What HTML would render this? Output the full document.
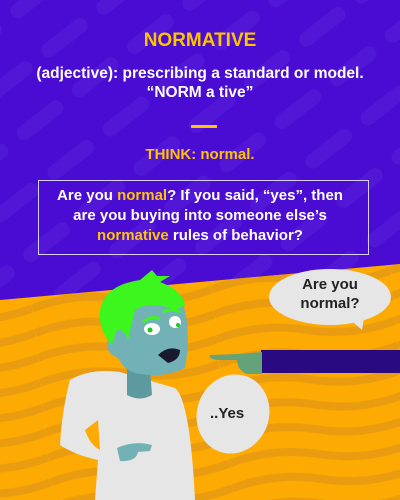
<!DOCTYPE html>
<html><head><meta charset="utf-8"><style>
html,body{margin:0;padding:0}
body{width:400px;height:500px;overflow:hidden;position:relative;background:#4a0cd2;font-family:"Liberation Sans",sans-serif}
svg{position:absolute;left:0;top:0}
.t{position:absolute;left:0;width:400px;text-align:center;color:#fff;font-weight:bold;white-space:nowrap}
.y{color:#ffc400}
</style></head><body>
<svg width="400" height="500" viewBox="0 0 400 500">
<defs>
<pattern id="p" width="70" height="50" patternUnits="userSpaceOnUse" patternTransform="rotate(-38)">
<rect x="0" y="12" width="55" height="15" rx="7.5" fill="#5116d6"/>
</pattern>
<pattern id="w" width="180" height="25" patternUnits="userSpaceOnUse" patternTransform="rotate(-6)">
<path d="M0 10 Q45 -2 90 10 T180 10" stroke="#e99c10" stroke-width="8" fill="none"/>
</pattern>
</defs>
<rect width="400" height="300" fill="url(#p)"/>
<polygon points="0,300 400,264 400,500 0,500" fill="#fdaa03"/>
<polygon points="0,300 400,264 400,500 0,500" fill="url(#w)"/>
<!-- body -->
<path d="M70 380 Q90 368 120 372 L175 388 Q190 400 195 500 L95 500 L98 460 Q75 455 60 445 Q62 410 70 380Z" fill="#e6e6e6"/>
<path d="M85 430 Q90 445 100 450 L98 420Z" fill="#fdaa03"/>
<path d="M117 448 Q135 440 152 445 L150 451 L138 452 Q136 462 120 461Z" fill="#72b2b6"/>
<!-- neck -->
<path d="M127 368 L150 368 L152 395 Q140 402 127 395Z" fill="#5c9a9f"/>
<!-- head -->
<path d="M110 300 Q150 285 182 300 Q192 330 185 368 Q165 378 140 374 Q125 372 118 358 Q104 352 108 340 Q110 330 115 330 Z" fill="#72b2b6"/>
<!-- hair -->
<path d="M100 310 Q105 285 140 280 L152 270 L157 276 L170 276 L160 282 Q182 290 185 305 L175 310 Q150 300 135 310 L128 340 Q120 322 115 335 L112 345 Q98 330 100 310Z" fill="#3cf61e"/>
<!-- eyes -->
<ellipse cx="152" cy="329" rx="8" ry="6" fill="#fff"/><circle cx="150" cy="330" r="2.5" fill="#1dc820"/>
<ellipse cx="175" cy="322" rx="6" ry="6" fill="#fff"/><circle cx="178" cy="325" r="2" fill="#1dc820"/>
<path d="M143 322 Q152 315 160 319" stroke="#3cf61e" stroke-width="3" fill="none"/>
<path d="M163 312 Q172 308 180 312" stroke="#3cf61e" stroke-width="3" fill="none"/>
<path d="M158 355 Q168 345 180 350 Q180 360 168 363 Z" fill="#1a1a2e"/>
<!-- speech bubbles -->
<ellipse cx="330" cy="297" rx="61" ry="28" fill="#e6e6e6"/>
<polygon points="348,318 365,312 362,330" fill="#e6e6e6"/>
<ellipse cx="233" cy="414" rx="36" ry="40" transform="rotate(20 233 414)" fill="#e6e6e6"/>
<polygon points="198,408 210,400 212,418" fill="#e6e6e6"/>
<!-- arm -->
<rect x="261" y="350" width="139" height="23" fill="#2a0a80"/>
<path d="M262 352 L240 354 L210 355 Q208 359 218 360 L237 360 Q238 372 248 374 L262 374Z" fill="#64a27a"/>
</svg>
<div class="t y" style="top:30px;font-size:19px">NORMATIVE</div>
<div class="t" style="top:64px;font-size:15.5px;line-height:19px">(adjective): prescribing a standard or model.<br>“NORM a tive”</div>
<div style="position:absolute;left:191px;top:125px;width:26px;height:3px;background:#ffc400"></div>
<div class="t y" style="top:146px;font-size:15px">THINK: normal.</div>
<div style="position:absolute;left:38px;top:180px;width:331px;height:75px;border:1px solid #d8d0f4;box-sizing:border-box"></div>
<div class="t" style="top:186px;font-size:15px;line-height:20px">Are you <span class="y">normal</span>? If you said, “yes”, then<br>are you buying into someone else’s<br><span class="y">normative</span> rules of behavior?</div>
<div style="position:absolute;left:270px;top:275px;width:120px;text-align:center;font-weight:bold;font-size:15px;line-height:19px;color:#222">Are you<br>normal?</div>
<div style="position:absolute;left:210px;top:405px;font-weight:bold;font-size:15px;color:#222">..Yes</div>
</body></html>
